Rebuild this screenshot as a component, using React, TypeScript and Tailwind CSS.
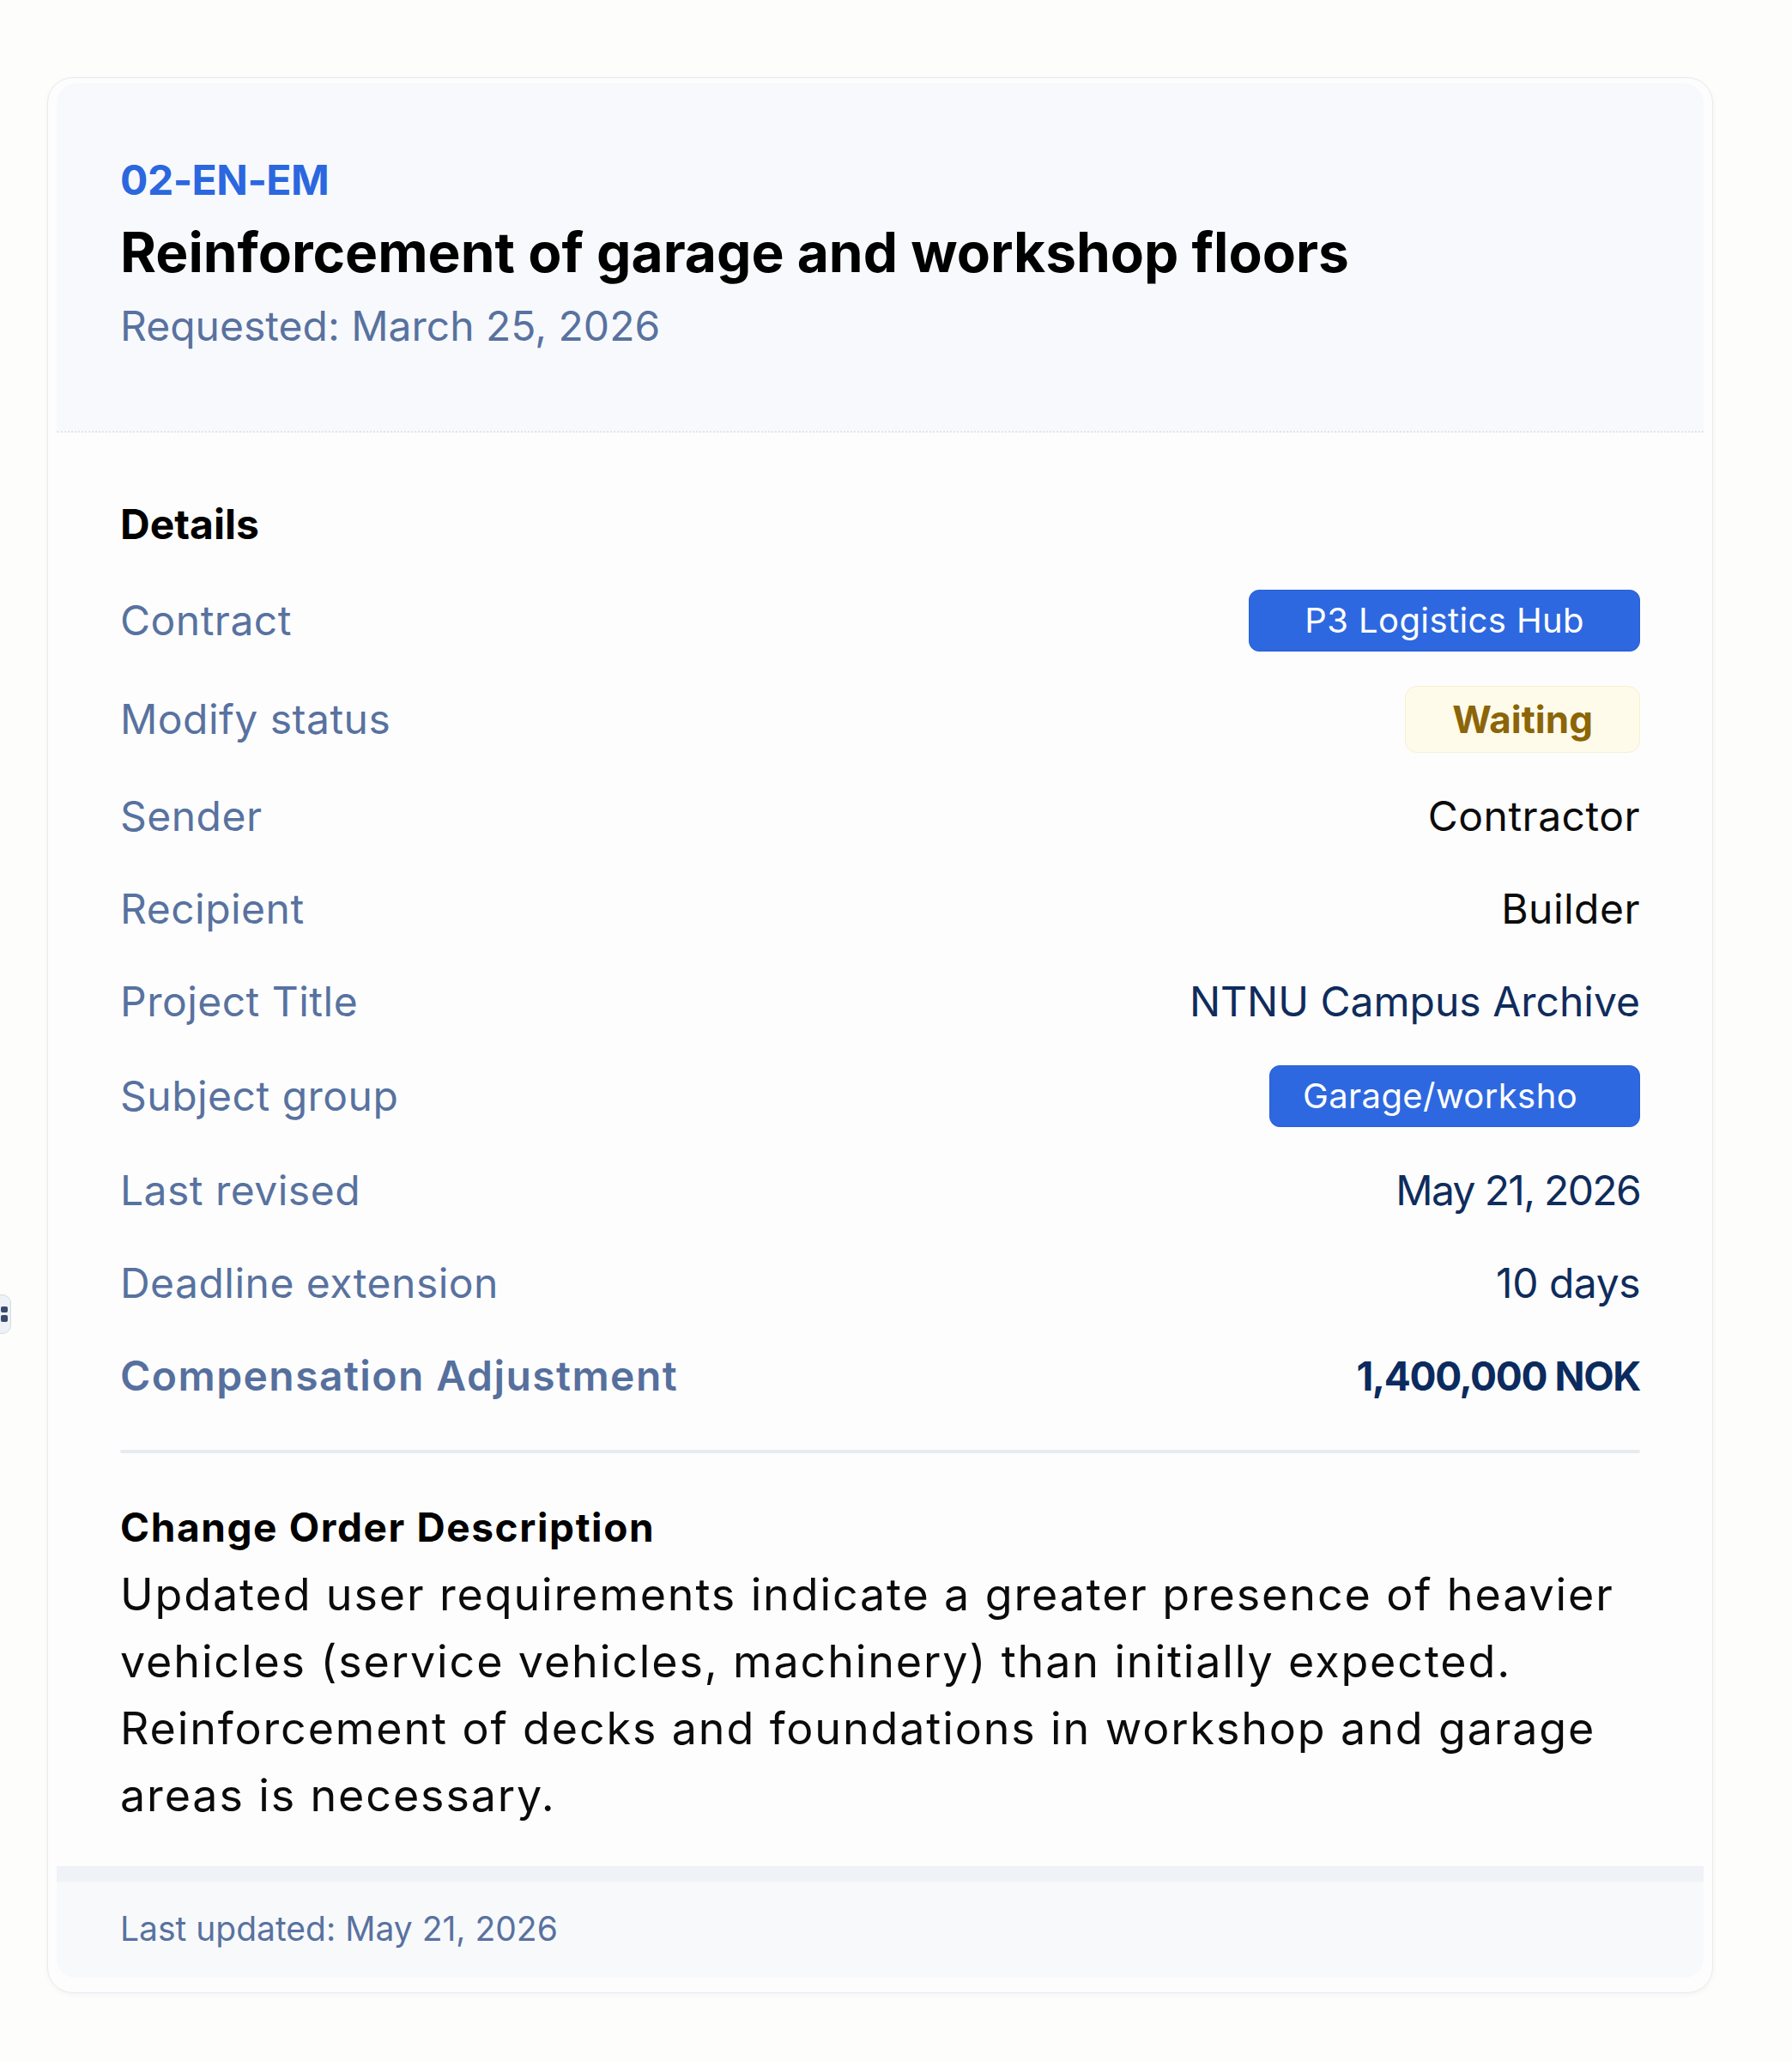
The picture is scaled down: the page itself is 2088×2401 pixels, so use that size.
const ROWS: { label: string; value: string; kind: 'blue' | 'waiting' | 'plain' | 'navy' | 'clip'; track?: string }[] = [
  { label: 'Contract', value: 'P3 Logistics Hub', kind: 'blue' },
  { label: 'Modify status', value: 'Waiting', kind: 'waiting' },
  { label: 'Sender', value: 'Contractor', kind: 'plain', track: 'tracking-[0.01em]' },
  { label: 'Recipient', value: 'Builder', kind: 'plain', track: 'tracking-[0.01em]' },
  { label: 'Project Title', value: 'NTNU Campus Archive', kind: 'navy', track: 'tracking-normal' },
  { label: 'Subject group', value: 'Garage/worksho', kind: 'clip' },
  { label: 'Last revised', value: 'May 21, 2026', kind: 'navy', track: 'tracking-[-0.035em]' },
  { label: 'Deadline extension', value: '10 days', kind: 'navy', track: 'tracking-[-0.01em]' },
];

const DESCRIPTION = [
  'Updated user requirements indicate a greater presence of heavier',
  'vehicles (service vehicles, machinery) than initially expected.',
  'Reinforcement of decks and foundations in workshop and garage',
  'areas is necessary.',
];

function Value({ kind, value, track }: { kind: string; value: string; track?: string }) {
  if (kind === 'blue') {
    return (
      <span className="flex h-[72px] items-center rounded-[12px] border border-[#2a60d4] bg-[#2e68e0] px-[64px] text-[40px] text-white tracking-[0.01em]">
        {value}
      </span>
    );
  }
  if (kind === 'clip') {
    return (
      <span className="flex h-[72px] w-[432px] items-center overflow-hidden whitespace-nowrap rounded-[12px] border border-[#2a60d4] bg-[#2e68e0] pl-[38px] text-[40px] text-white tracking-[0.01em]">
        {value}
      </span>
    );
  }
  if (kind === 'waiting') {
    return (
      <span className="flex h-[78px] items-center rounded-[14px] border border-[#f5efd4] bg-[#fefbea] px-[54px] text-[44px] font-bold text-[#8c6508]">
        {value}
      </span>
    );
  }
  return (
    <span className={`text-[48px] leading-[68px] ${track ?? ''} ${kind === 'plain' ? 'text-[#0b0b0b]' : 'text-[#0f2c5c]'}`}>
      {value}
    </span>
  );
}

export default function App() {
  return (
    <div className="relative min-h-[2401px] w-full bg-[#fdfdfc] pl-[55px] pt-[90px] font-['Inter',sans-serif]">
      {/* partly hidden widget at the left edge */}
      <div className="absolute left-[-24px] top-[1508px] flex h-[46px] w-[37px] items-center justify-end rounded-[10px] border border-[#d6dbe4] bg-[#eef1f6] pr-[2px]">
        <svg width="10" height="22" viewBox="0 0 10 22" fill="none">
          <rect x="1" y="2" width="8" height="7" rx="2" fill="#3a4a6b" />
          <rect x="1" y="12" width="8" height="8" rx="2" fill="#3a4a6b" />
        </svg>
      </div>

      <div className="w-[1941px] rounded-[30px] border border-[#e7eaf0] bg-[#fdfdfd] px-[10px] pb-[17px] pt-[6px] shadow-[0_2px_6px_rgba(15,23,42,0.04)]">
        <div className="rounded-t-[24px] border-b-2 border-dotted border-[#e1e5ec] bg-[#f8f9fc] px-[74px] pb-[86px] pt-[77px]">
          <div className="text-[48px] font-bold leading-[72px] tracking-[-0.01em] text-[#2b67df]">02-EN-EM</div>
          <h1 className="mt-[8px] text-[64px] font-bold leading-[80px] tracking-normal text-black">
            Reinforcement of garage and workshop floors
          </h1>
          <div className="mt-[10px] text-[48px] leading-[72px] text-[#5872a0]">
            Requested: March 25, 2026
          </div>
        </div>

        <div className="px-[74px] pb-[43px] pt-[71px]">
          <h2 className="text-[48px] font-bold leading-[72px] text-black">Details</h2>
          <div className="mt-[40px] flex flex-col gap-[40px]">
            {ROWS.map(row => (
              <div key={row.label} className="flex items-center justify-between">
                <span className="text-[48px] leading-[68px] tracking-[0.01em] text-[#5872a0]">{row.label}</span>
                <Value kind={row.kind} value={row.value} track={row.track} />
              </div>
            ))}
            <div className="flex items-center justify-between">
              <span className="text-[48px] font-semibold leading-[68px] tracking-[0.03em] text-[#56709e]">Compensation Adjustment</span>
              <span className="text-[46px] font-bold leading-[68px] tracking-[-0.03em] text-[#0b2b5f]">1,400,000 NOK</span>
            </div>
          </div>

          <div className="my-[52px] h-[4px] rounded-full bg-[#e7ebf1]" />

          <h3 className="text-[46px] font-bold leading-[69px] tracking-[0.035em] text-black">Change Order Description</h3>
          <p className="mt-[5px] text-[52px] leading-[78px] tracking-[0.036em] text-[#0b0b0b]">
            {DESCRIPTION.map(line => (
              <span key={line} className="block whitespace-nowrap">{line}</span>
            ))}
          </p>
        </div>

        <div className="rounded-b-[22px] border-t-[18px] border-[#eff2f6] bg-[#f8f9fb] px-[74px] pb-[27px] pt-[25px]">
          <span className="text-[39px] leading-[60px] text-[#5872a0]">Last updated: May 21, 2026</span>
        </div>
      </div>
    </div>
  );
}
